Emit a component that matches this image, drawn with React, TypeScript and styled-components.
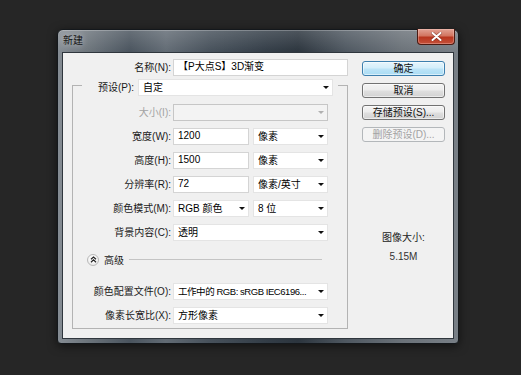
import React, { ReactNode } from 'react'
import styled, { createGlobalStyle } from 'styled-components'

const FONT = `"Liberation Sans", "Noto Sans CJK SC", sans-serif`

const GlobalStyle = createGlobalStyle`
    html,
    body {
        background: #262626;
        margin: 0;
        padding: 0;
    }

    body {
        font-family: ${FONT};
    }
`

export default function App() {
    return (
        <Page>
            <GlobalStyle />
            <Window>
                <TitleBar>
                    <Title>新建</Title>
                    <CloseButton aria-label="关闭">
                        <svg width="11" height="9" viewBox="0 0 11 9">
                            <path
                                d="M1.5 1 L9.5 8 M9.5 1 L1.5 8"
                                stroke="#5a1a10"
                                strokeWidth="3.2"
                                strokeLinecap="round"
                                opacity="0.5"
                            />
                            <path
                                d="M1.5 1 L9.5 8 M9.5 1 L1.5 8"
                                stroke="#ffffff"
                                strokeWidth="2"
                                strokeLinecap="round"
                            />
                        </svg>
                    </CloseButton>
                </TitleBar>
                <Client>
                    <MainColumn>
                        <NameRow>
                            <Label>名称(N):</Label>
                            <TextField>【P大点S】3D渐变</TextField>
                        </NameRow>
                        <Group>
                            <PresetRow>
                                <Label>预设(P):</Label>
                                <Select>自定</Select>
                            </PresetRow>
                            <Fields>
                                <Row label="大小(I):" disabled>
                                    <Select disabled />
                                </Row>
                                <Row label="宽度(W):">
                                    <Pair>
                                        <TextField>1200</TextField>
                                        <Select>像素</Select>
                                    </Pair>
                                </Row>
                                <Row label="高度(H):">
                                    <Pair>
                                        <TextField>1500</TextField>
                                        <Select>像素</Select>
                                    </Pair>
                                </Row>
                                <Row label="分辨率(R):">
                                    <Pair>
                                        <TextField>72</TextField>
                                        <Select>像素/英寸</Select>
                                    </Pair>
                                </Row>
                                <Row label="颜色模式(M):">
                                    <Pair>
                                        <Select>RGB 颜色</Select>
                                        <Select>8 位</Select>
                                    </Pair>
                                </Row>
                                <Row label="背景内容(C):">
                                    <Select>透明</Select>
                                </Row>
                            </Fields>
                            <AdvancedToggle>
                                <ToggleIcon>
                                    <svg width="7" height="7" viewBox="0 0 7 7">
                                        <path
                                            d="M1 3.3 L3.5 1 L6 3.3 M1 6.2 L3.5 3.9 L6 6.2"
                                            fill="none"
                                            stroke="#222"
                                            strokeWidth="1.2"
                                        />
                                    </svg>
                                </ToggleIcon>
                                <span>高级</span>
                                <Rule />
                            </AdvancedToggle>
                            <Fields $top={17}>
                                <Row label="颜色配置文件(O):">
                                    <Select compact>工作中的 RGB: sRGB IEC6196...</Select>
                                </Row>
                                <Row label="像素长宽比(X):">
                                    <Select>方形像素</Select>
                                </Row>
                            </Fields>
                        </Group>
                    </MainColumn>
                    <SideColumn>
                        <Button $primary>确定</Button>
                        <Button>取消</Button>
                        <Button>存储预设(S)...</Button>
                        <Button disabled>删除预设(D)...</Button>
                        <SizeInfo>
                            <div>图像大小:</div>
                            <SizeValue>5.15M</SizeValue>
                        </SizeInfo>
                    </SideColumn>
                </Client>
            </Window>
        </Page>
    )
}

function Row({
    label,
    disabled = false,
    children,
}: {
    label: string
    disabled?: boolean
    children?: ReactNode
}) {
    return (
        <FieldRow>
            <Label $disabled={disabled}>{label}</Label>
            {children}
        </FieldRow>
    )
}

function Select({
    children,
    disabled = false,
    compact = false,
}: {
    children?: ReactNode
    disabled?: boolean
    compact?: boolean
}) {
    return (
        <SelectRoot $disabled={disabled}>
            <SelectText $compact={compact}>{children}</SelectText>
            <Arrow $disabled={disabled} />
        </SelectRoot>
    )
}

const Page = styled.div`
    background: #262626;
    box-sizing: border-box;
    height: 375px;
    overflow: hidden;
    padding: 29px 0 0 57px;
    width: 521px;
`

const Window = styled.div`
    background: linear-gradient(180deg, rgba(255, 255, 255, 0.16) 0, rgba(255, 255, 255, 0) 22px),
        linear-gradient(
            90deg,
            #858c93 0%,
            #6e767d 7%,
            #4a545e 18%,
            #626b74 27%,
            #47515b 38%,
            #333d47 52%,
            #2c353e 60%,
            #4f5861 72%,
            #6b7279 86%,
            #787f86 100%
        );
    border: 1px solid #14181c;
    border-radius: 6px 6px 4px 4px;
    box-shadow: 0 2px 10px rgba(0, 0, 0, 0.55), inset 0 1px 0 rgba(255, 255, 255, 0.25);
    box-sizing: border-box;
    display: flex;
    flex-direction: column;
    height: 315px;
    padding: 0 4px 4px;
    width: 402px;
`

const TitleBar = styled.div`
    align-items: flex-start;
    display: flex;
    height: 22px;
    justify-content: space-between;
    padding-left: 1px;
`

const Title = styled.div`
    color: #141414;
    font-size: 10px;
    line-height: 12px;
    margin-top: 5px;
    text-shadow: 0 0 6px rgba(255, 255, 255, 0.6);
`

const CloseButton = styled.div`
    align-items: center;
    background: linear-gradient(180deg, #e2a395 0%, #d27561 45%, #b8361f 55%, #c4503a 100%);
    border: 1px solid #4b1a12;
    border-radius: 0 0 4px 4px;
    border-top: none;
    box-shadow: inset 0 0 0 1px rgba(255, 210, 200, 0.35);
    box-sizing: border-box;
    display: flex;
    height: 16px;
    justify-content: center;
    margin: -1px -1px 0 0;
    width: 38px;
`

const Client = styled.div`
    background: #f0f0f0;
    border: 1px solid #2f363d;
    box-sizing: border-box;
    display: flex;
    height: 287px;
    width: 392px;
`

const MainColumn = styled.div`
    padding-top: 6px;
    width: 285px;
`

const SideColumn = styled.div`
    display: flex;
    flex-direction: column;
    gap: 7px;
    margin-left: 14px;
    padding-top: 8px;
    width: 83px;
`

const Label = styled.div<{ $disabled?: boolean }>`
    color: ${(p) => (p.$disabled ? '#a3a3a3' : '#1a1a1a')};
    font-size: 10px;
    line-height: 17px;
    text-align: right;
    white-space: nowrap;
`

const NameRow = styled.div`
    column-gap: 2px;
    display: grid;
    grid-template-columns: 108px 175px;
    height: 16px;
`

const TextField = styled.div`
    background: #ffffff;
    border: 1px solid #d4d4d4;
    box-sizing: border-box;
    color: #000;
    font-size: 10px;
    height: 100%;
    line-height: 14px;
    padding: 0 4px;
    white-space: nowrap;
`

const Group = styled.div`
    border: 1px solid #b3b3b3;
    box-sizing: border-box;
    margin: 10px 0 0 9px;
    padding-bottom: 4px;
    width: 276px;
`

const PresetRow = styled.div`
    background: #f0f0f0;
    column-gap: 4px;
    display: grid;
    grid-template-columns: 52px 195px;
    height: 17px;
    margin: -7px 9px 0;
`

const Fields = styled.div<{ $top?: number }>`
    display: flex;
    flex-direction: column;
    gap: 7px;
    padding-top: ${(p) => p.$top ?? 8}px;
`

const FieldRow = styled.div`
    column-gap: 2px;
    display: grid;
    grid-template-columns: 98px 155px;
    height: 17px;
`

const Pair = styled.div`
    column-gap: 4px;
    display: grid;
    grid-template-columns: 76px 75px;
`

const SelectRoot = styled.div<{ $disabled: boolean }>`
    align-items: center;
    background: ${(p) => (p.$disabled ? '#f3f3f3' : '#ffffff')};
    border: 1px solid ${(p) => (p.$disabled ? '#c6c6c6' : '#e4e4e4')};
    box-sizing: border-box;
    display: flex;
    font-size: 10px;
    height: 17px;
    min-width: 0;
    padding: 0 3px 0 4px;
`

const SelectText = styled.span<{ $compact: boolean }>`
    color: #000;
    flex: 1;
    font-size: ${(p) => (p.$compact ? '9.5px' : '10px')};
    letter-spacing: ${(p) => (p.$compact ? '-0.45px' : '0')};
    line-height: 15px;
    min-width: 0;
    overflow: hidden;
    white-space: nowrap;
`

const Arrow = styled.span<{ $disabled: boolean }>`
    border-left: 3px solid transparent;
    border-right: 3px solid transparent;
    border-top: 3px solid ${(p) => (p.$disabled ? '#b0b0b0' : '#111111')};
    flex-shrink: 0;
    height: 0;
    margin-left: 2px;
    width: 0;
`

const AdvancedToggle = styled.div`
    align-items: center;
    color: #1a1a1a;
    display: flex;
    font-size: 10px;
    gap: 5px;
    height: 13px;
    margin-top: 12px;
    padding: 0 25px 0 14px;
`

const ToggleIcon = styled.span`
    align-items: center;
    background: radial-gradient(circle at 50% 35%, #ffffff 0%, #f4f4f4 55%, #dcdcdc 100%);
    border: 1px solid #b9b9b9;
    border-radius: 50%;
    box-sizing: border-box;
    display: flex;
    height: 12px;
    justify-content: center;
    width: 12px;
`

const Rule = styled.span`
    background: #c4c4c4;
    display: block;
    flex: 1;
    height: 1px;
`

const Button = styled.button<{ $primary?: boolean }>`
    background: ${(p) =>
        p.$primary
            ? 'linear-gradient(180deg, #e6f5fc 0%, #d3eefb 48%, #bde4f7 52%, #a9dcf4 100%)'
            : 'linear-gradient(180deg, #f4f4f4 0%, #ececec 48%, #dfdfdf 52%, #d2d2d2 100%)'};
    border: 1px solid ${(p) => (p.$primary ? '#3d7fae' : '#727272')};
    border-radius: 3px;
    box-shadow: inset 0 0 0 1px rgba(255, 255, 255, 0.55);
    box-sizing: border-box;
    color: #111;
    font-family: ${FONT};
    font-size: 10px;
    height: 15px;
    line-height: 12px;
    padding: 0;
    width: 100%;

    &:disabled {
        background: #f4f4f4;
        border-color: #b3b7ba;
        box-shadow: none;
        color: #a3a3a3;
    }
`

const SizeInfo = styled.div`
    color: #222;
    font-size: 10px;
    line-height: 12px;
    margin-top: 83px;
    text-align: center;
`

const SizeValue = styled.div`
    color: #333;
    margin-top: 7px;
`
